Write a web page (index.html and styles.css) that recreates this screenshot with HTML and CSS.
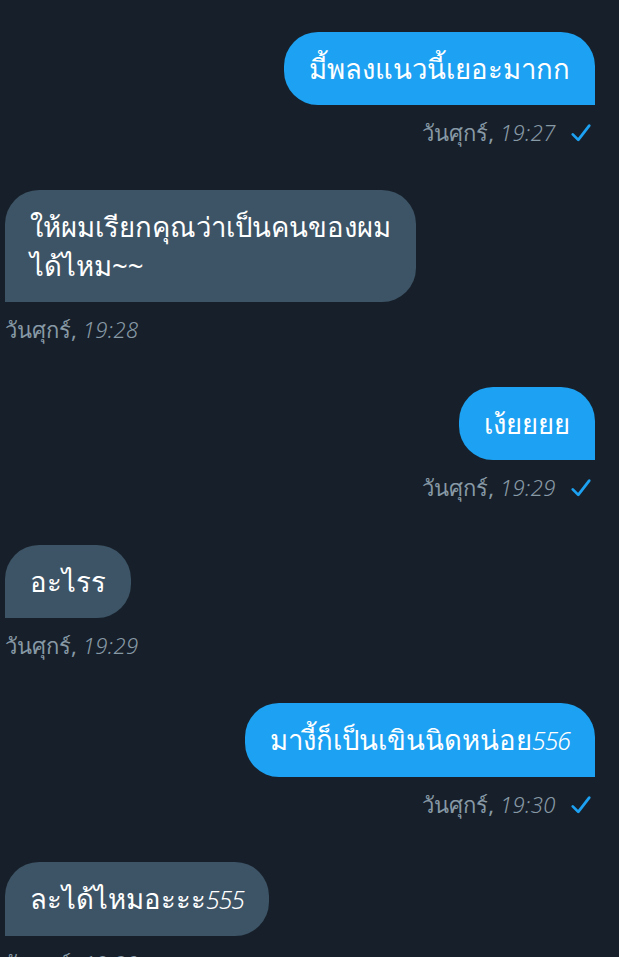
FILE: index.html
```html
<!DOCTYPE html>
<html>

<head>
    <title>Messages</title>
    <link rel="stylesheet" href="styles.css">
</head>

<body>
    <div class="chat">
        <div class="message sent">
            <div class="bubble">มี้พลงแนวนี้เยอะมากก</div>
            <div class="meta">
                <span>วันศุกร์, <span class="num">19:27</span></span>
                <svg class="check" viewBox="0 0 24 24"><path d="M3 13.5l6 6L21 4"/></svg>
            </div>
        </div>

        <div class="message received">
            <div class="bubble">ให้ผมเรียกคุณว่าเป็นคนของผม<br>ได้ไหม~~</div>
            <div class="meta"><span>วันศุกร์, <span class="num">19:28</span></span></div>
        </div>

        <div class="message sent">
            <div class="bubble">เง้ยยยย</div>
            <div class="meta">
                <span>วันศุกร์, <span class="num">19:29</span></span>
                <svg class="check" viewBox="0 0 24 24"><path d="M3 13.5l6 6L21 4"/></svg>
            </div>
        </div>

        <div class="message received">
            <div class="bubble">อะไรร</div>
            <div class="meta"><span>วันศุกร์, <span class="num">19:29</span></span></div>
        </div>

        <div class="message sent">
            <div class="bubble">มางี้ก็เป็นเขินนิดหน่อย<span class="num">556</span></div>
            <div class="meta">
                <span>วันศุกร์, <span class="num">19:30</span></span>
                <svg class="check" viewBox="0 0 24 24"><path d="M3 13.5l6 6L21 4"/></svg>
            </div>
        </div>

        <div class="message received">
            <div class="bubble">ละได้ไหมอะะะ<span class="num">555</span></div>
            <div class="meta"><span>วันศุกร์, <span class="num">19:30</span></span></div>
        </div>
    </div>
</body>
</html>
```

FILE: styles.css
```css
html, body {
    margin: 0;
    height: 100%;
    overflow: hidden;
    background-color: #17202a;
}

body {
    font-family: "Noto Sans", "Liberation Sans", sans-serif;
}

.chat {
    display: flex;
    flex-direction: column;
    padding: 32px 24px 0 5px;
}

.message {
    display: flex;
    flex-direction: column;
    margin-bottom: 43px;
}

.message.sent {
    align-items: flex-end;
}

.message.received {
    align-items: flex-start;
}

.bubble {
    padding: 17px 25px 17px 25px;
    font-size: 27.5px;
    line-height: 39px;
    color: #fff;
    border-radius: 34px;
}

.sent .bubble {
    background-color: #1da1f2;
    border-bottom-right-radius: 0;
}

.received .bubble {
    background-color: #3d5466;
    border-bottom-left-radius: 0;
}

/* handwritten digits in the shot are thin and narrow */
.num {
    font-weight: 300;
    font-style: italic;
    letter-spacing: -1px;
    font-size: 0.9em;
}

.meta {
    display: flex;
    align-items: center;
    gap: 14px;
    margin-top: 14px;
    height: 28px;
    font-size: 22px;
    color: #8899a6;
}

.meta .num {
    font-size: 1em;
    letter-spacing: 0.5px;
}

.sent .meta {
    padding-right: 3px;
}

.check {
    width: 22px;
    height: 22px;
    fill: none;
    stroke: #1da1f2;
    stroke-width: 3;
    stroke-linecap: round;
    stroke-linejoin: round;
}
```
